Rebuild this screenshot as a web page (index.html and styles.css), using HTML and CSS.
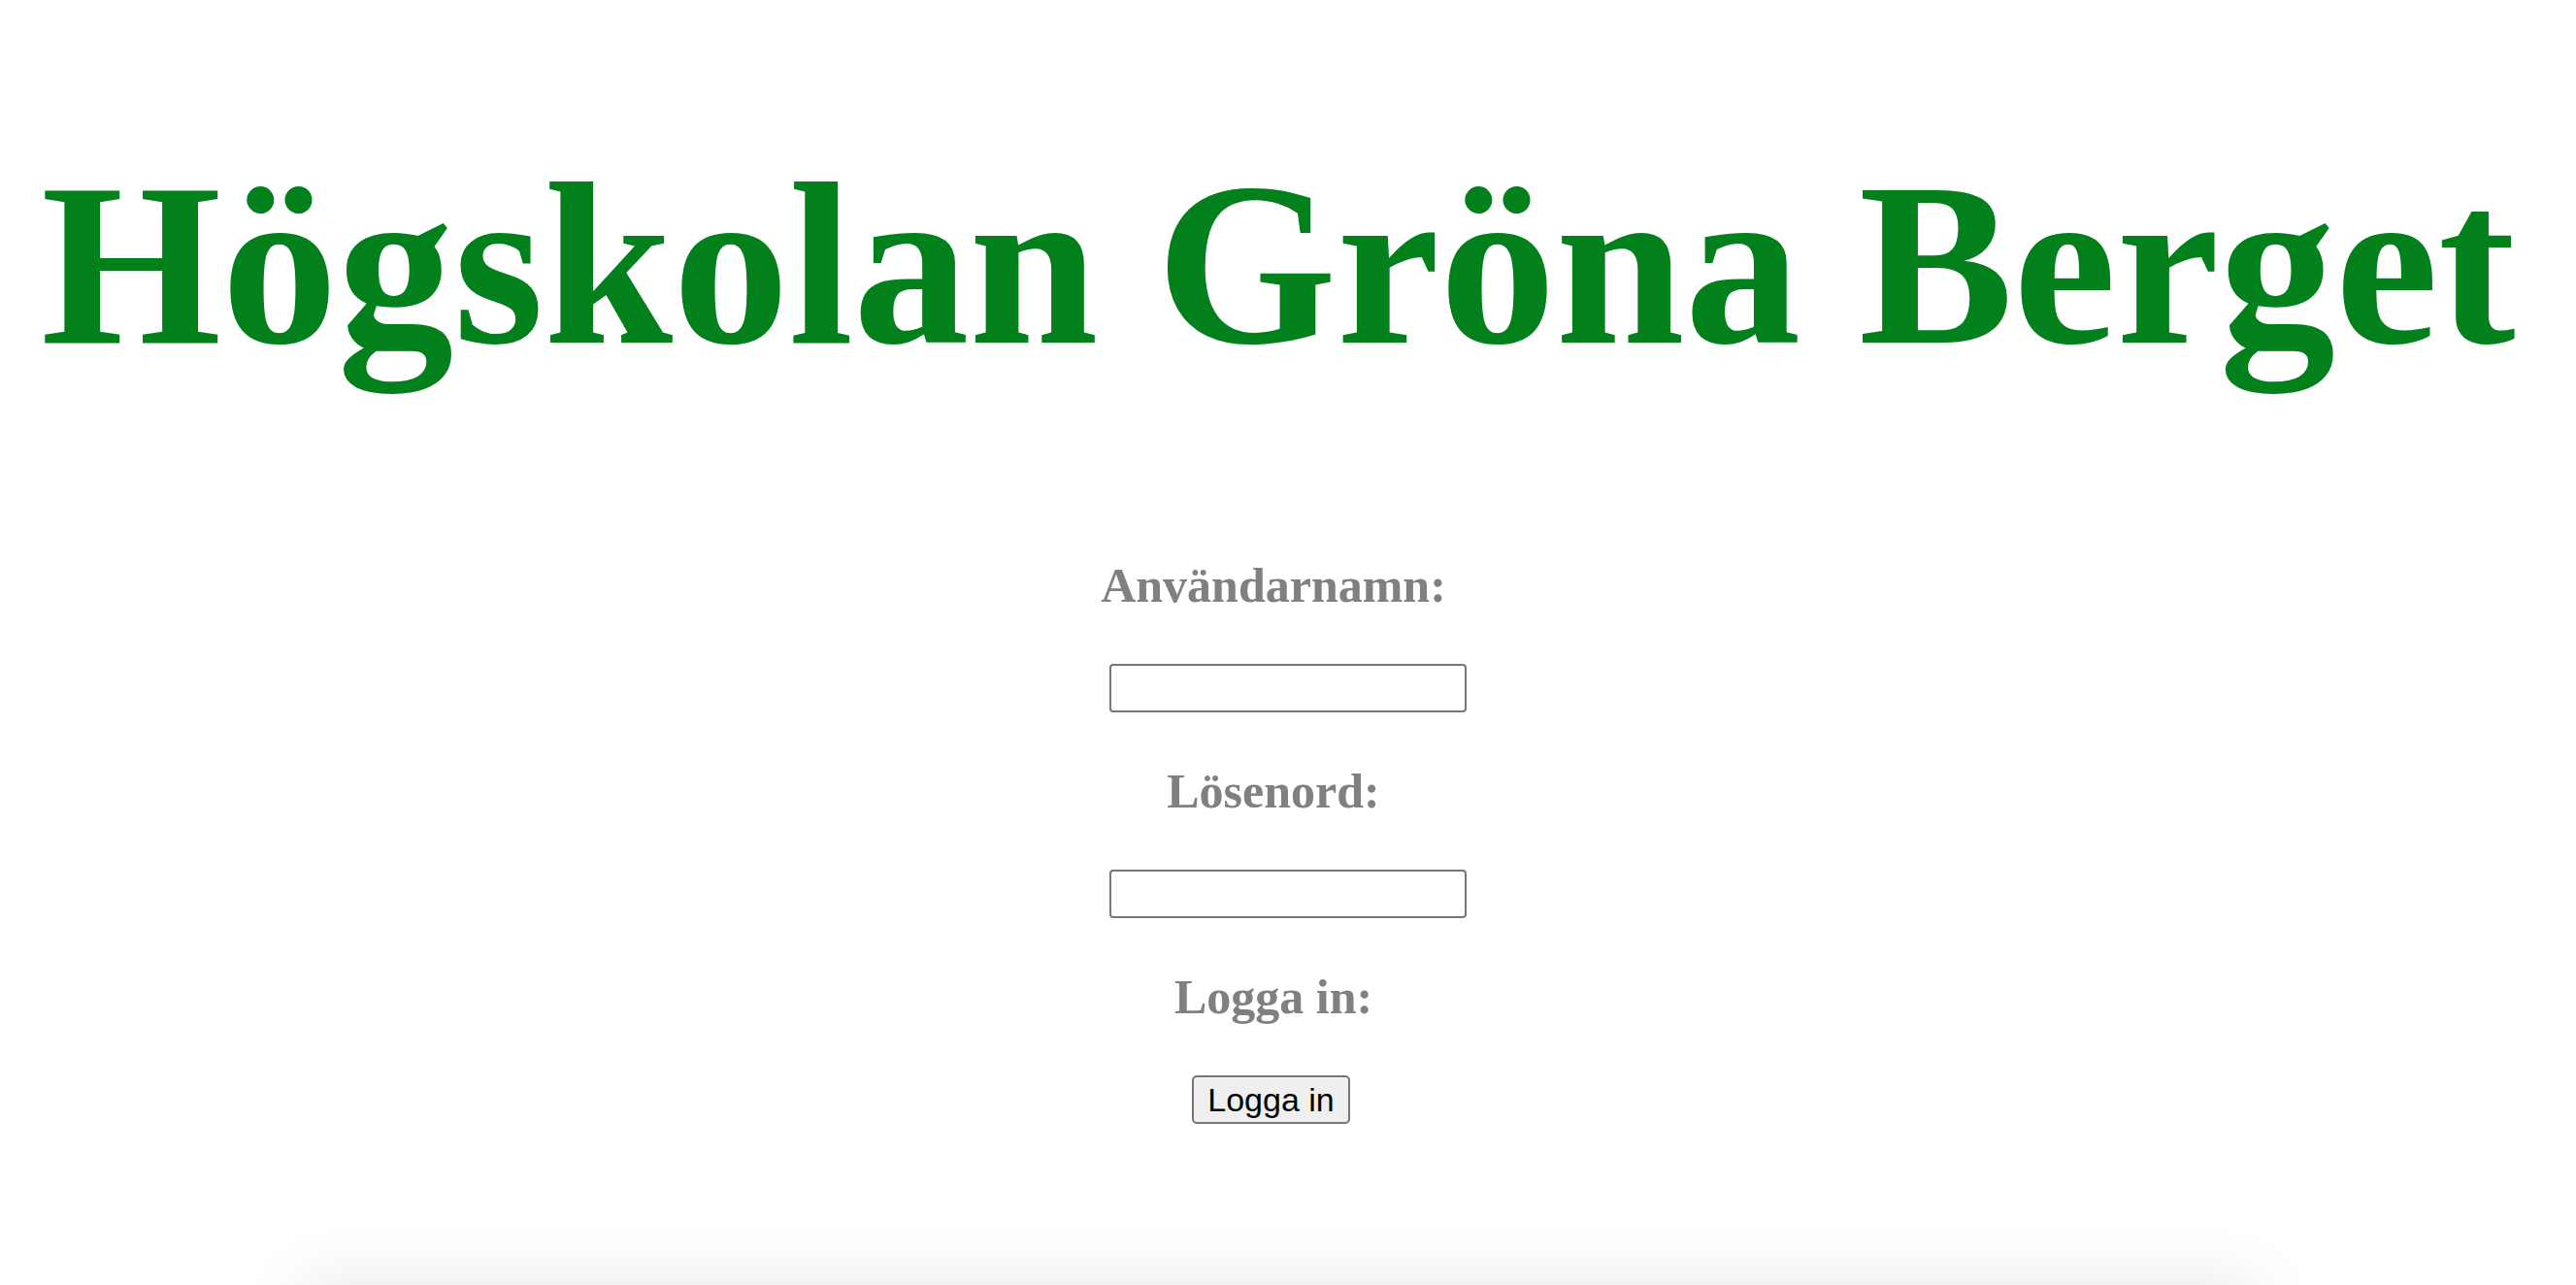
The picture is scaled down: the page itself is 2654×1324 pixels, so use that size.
FILE: index.html
```html
<!DOCTYPE html>
<html lang="sv">
<head>
<meta charset="utf-8">
<title>Högskolan Gröna Berget</title>
<link rel="stylesheet" href="styles.css">
</head>
<body>
<div class="page">
  <h1 class="title">Högskolan Gröna Berget</h1>
  <form class="login">
    <label class="label" for="user">Användarnamn:</label>
    <input class="field" id="user" type="text">
    <label class="label" for="pass">Lösenord:</label>
    <input class="field" id="pass" type="password">
    <label class="label" for="go">Logga in:</label>
    <button class="button" id="go" type="button">Logga in</button>
  </form>
  <footer class="footer"></footer>
</div>
</body>
</html>
```
FILE: styles.css
```css
html, body {
  margin: 0;
  padding: 0;
  background: #ffffff;
  overflow: hidden;
}

.page {
  display: flex;
  flex-direction: column;
  align-items: center;
}

.title {
  margin: 135px 20px 0 0;
  font-family: "Liberation Serif", "Times New Roman", serif;
  font-weight: bold;
  font-size: 239px;
  line-height: 276px;
  color: #02801c;
  white-space: nowrap;
  text-align: center;
}

.login {
  margin-top: 163px;
  display: flex;
  flex-direction: column;
  align-items: center;
  gap: 52px;
}

.label {
  display: block;
  margin-right: 30px;
  font-family: "Liberation Serif", "Times New Roman", serif;
  font-weight: bold;
  font-size: 50px;
  line-height: 58px;
  color: #808080;
}

.field {
  box-sizing: border-box;
  width: 368px;
  height: 50px;
  margin: 0;
  border: 2px solid #767676;
  border-radius: 4px;
  background: #ffffff;
}

.button {
  box-sizing: border-box;
  height: 50px;
  margin: 0 35px 0 0;
  padding: 0 14px;
  border: 2px solid #767676;
  border-radius: 5px;
  background: #efefef;
  color: #000000;
  font-family: "Liberation Sans", Arial, sans-serif;
  font-size: 34px;
  line-height: 40px;
}

.footer {
  margin-top: 166px;
  width: 2010px;
  height: 200px;
  margin-right: 20px;
  box-shadow: 0 0 70px rgba(0, 0, 0, 0.1);
}
```
